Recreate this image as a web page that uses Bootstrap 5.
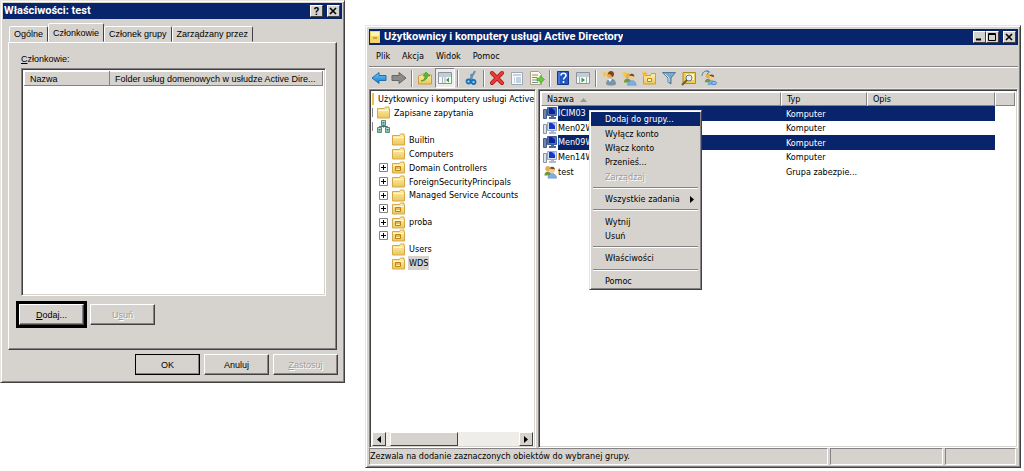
<!DOCTYPE html>
<html lang="pl">
<head>
<meta charset="utf-8">
<meta name="viewport" content="width=device-width, initial-scale=1">
<title>Użytkownicy i komputery usługi Active Directory</title>
<link href="https://cdn.jsdelivr.net/npm/bootstrap@5.3.0/dist/css/bootstrap.min.css" rel="stylesheet">
<style>
:root{--face:#d6d3ce;--navy:#08246b;--hi:#fff;--sh:#848284;--dk:#424142}
body{font:9px/14px "DejaVu Sans Condensed","DejaVu Sans",sans-serif;color:#000;background:#fff}
svg{display:block;flex:none}
.frame{background:var(--face);border:1px solid;border-color:#e7e5e1 var(--dk) var(--dk) #e7e5e1;box-shadow:inset 1px 1px var(--hi),inset -1px -1px var(--sh)}
.dlg{flex:0 0 345px;height:383px;padding:2px 2px 7px;font-family:"Liberation Sans",sans-serif}
.console{min-width:0;margin:25px 3px 3px 20px;padding:3px 2px 2px 3px}
.titlebar{background:var(--navy);color:#fff;height:16px;padding:0 2px 0 1px;font:bold 11px/16px Roboto,"Liberation Sans",sans-serif}
.capbtn{width:13px;height:12px;padding:0;background:var(--face);border:1px solid;border-color:var(--hi) var(--dk) var(--dk) var(--hi);border-radius:0}
.tabrow{padding:6px 6px 0;height:23px}
.tabrow button{height:16px;padding:0 4px;border:1px solid;border-color:var(--hi) var(--dk) transparent var(--hi);border-radius:2px 2px 0 0;background:var(--face);line-height:14px;white-space:nowrap}
.tabrow button.active{height:19px;z-index:1}
.panel{margin:0 5px;height:308px;border:1px solid;border-color:var(--hi) var(--dk) var(--dk) var(--hi);box-shadow:inset -1px -1px var(--sh);padding:9px 10px 0 10px}
.inset-l{margin-left:2px}
.sunken{background:#fff;border:1px solid;border-color:var(--sh) var(--hi) var(--hi) var(--sh);box-shadow:inset 1px 1px var(--dk),inset -1px -1px var(--face)}
.members{height:228px;margin-top:2px;padding:2px}
.grid-head th{height:14px;line-height:12px;padding:0 5px;font-weight:normal;background:var(--face);border:1px solid;border-color:var(--hi) var(--sh) var(--sh) var(--hi);white-space:nowrap;overflow:hidden}
.push{width:65px;height:21px;padding:0;background:var(--face);border:1px solid;border-color:var(--hi) var(--dk) var(--dk) var(--hi);box-shadow:inset -1px -1px var(--sh);line-height:14px;border-radius:0;color:#000}
.push:disabled{color:#a09d98;text-shadow:1px 1px #fff}
.push.default{outline:1px solid #000;outline-offset:-1px}
.push.marked{outline:3px solid #000}
.addrow{gap:6px}
.menus{height:22px;padding:0 0 0 1px;border-bottom:1px solid var(--sh)}
.menus button{border:0;background:none;padding:0 6px}
.tools{height:22px;border-top:1px solid var(--hi);border-bottom:1px solid #e7e5e1}
.tools button{width:20px;height:20px;padding:2px;border:0;background:none}
.tools button.active{background:#efedea;border:1px solid;border-color:var(--sh) var(--hi) var(--hi) var(--sh);padding:1px}
.vsep{width:6px;height:17px;flex:none;background:linear-gradient(var(--sh),var(--sh)) 2px 0/1px 100% no-repeat,linear-gradient(#fff,#fff) 3px 0/1px 100% no-repeat}
.panes{min-height:0;gap:2px}
.treepane{flex:0 0 167px;padding:2px 2px 1px;overflow:hidden}
.tree{height:178px}
.tree li{gap:4px;white-space:nowrap;min-height:0}
.tree li.lv2{padding-left:7px}
.tree li.leaf{padding-left:20px}
.tree .cur{background:var(--face);padding:0 1px;margin-left:-1px}
.sb{height:14px;background:#efedea}
.sb button{width:14px;height:14px;padding:2px}
.sb .thumb{width:68px;margin-left:4px}
.raised{background:var(--face);border:1px solid;border-color:var(--hi) var(--dk) var(--dk) var(--hi)}
.listpane{min-width:0;padding:2px}
.objs{table-layout:fixed;width:100%;white-space:nowrap;border-collapse:separate;border-spacing:0}
.objs tbody tr:nth-child(odd) td{height:15px}
.objs tbody tr:nth-child(even) td{height:14px}
.objs td{padding:0 0 0 5px;overflow:hidden;line-height:14px}
.objs td:first-child{padding-left:2px}
.objs tr.sel td:not(:first-child),.objs tr.sel .nm{background:var(--navy);color:#fff}
.objs tr.sel td:last-child{background:none}
.objs tr.sel .nm{height:15px}
.ctx{left:50px;top:20px;width:113px;height:180px;padding:1px;z-index:5}
.ctx button{border:0;background:none;padding:0 6px 0 14px;min-height:0;line-height:14px;text-align:left;white-space:nowrap}
.ctx button.hot{background:var(--navy);color:#fff}
.ctx button:disabled{color:#a09d98;text-shadow:1px 1px #fff}
.ctx hr{margin:0 2px;height:8px;border:0;opacity:1;flex:none;background:linear-gradient(var(--sh),var(--sh)) 0 3px/100% 1px no-repeat,linear-gradient(#fff,#fff) 0 4px/100% 1px no-repeat}
.status{height:17px;gap:2px;padding-right:2px}
.status div{border:1px solid;border-color:var(--sh) var(--hi) var(--hi) var(--sh);line-height:15px;white-space:nowrap}
.status .p2{width:113px}.status .p3{width:71px}
</style>
</head>
<body class="d-flex vh-100 align-items-start">
<svg width="0" height="0" class="position-absolute" aria-hidden="true">
<defs>
<linearGradient id="gf" x2="0" y2="1"><stop stop-color="#fff0b0"/><stop offset="1" stop-color="#eec65a"/></linearGradient>
<linearGradient id="gb" x2="0" y2="1"><stop stop-color="#6cc8f8"/><stop offset="1" stop-color="#1278d0"/></linearGradient>
<symbol id="folder" viewBox="0 0 13 13"><path d="M.5 12V2.5h7l1-1.500h3.500v2h.5v9z" fill="url(#gf)" stroke="#d3a848"/><path d="M1.500 4.500h10" stroke="#fff8d8"/></symbol>
<symbol id="ou" viewBox="0 0 13 13"><use href="#folder"/><path d="M3.500 5.500h5v4h-5zM3.500 7h5" fill="#fff3b0" stroke="#b98312"/></symbol>
<symbol id="domain" viewBox="0 0 13 13"><path d="M4.500.5h4v5h-4zM.5 7.500h4v5h-4zM8.500 7.500h4v5h-4z" fill="#b6dfc8" stroke="#4e8f80"/><path d="M5.500 2.500h2M5.500 4h2M1.500 9.500h2M9.500 9.500h2M1.500 11h2M9.500 11h2M6.500 5.500v2M2.500 7V6.500h8V7" stroke="#42737b" fill="none"/></symbol>
<symbol id="plus" viewBox="0 0 9 9"><path d="M.5.5h8v8h-8z" fill="#fff" stroke="#848284"/><path d="M2 4.500h5M4.500 2v5" stroke="#000"/></symbol>
<symbol id="pc" viewBox="0 0 15 14"><path d="M.5 3.500h3v9h-3z" fill="#dde3ea" stroke="#8793a5"/><path d="M4.500 1.500h9v8h-9z" fill="#d8e2f4" stroke="#9aa9c8"/><path d="M6 2h6v6H6z" fill="#1836c8"/><path d="M9 2h3v3z" fill="#84b4ff"/><path d="M8 10h3v1h2v2H6v-2h2z" fill="#aeb9cb"/></symbol>
<symbol id="pcs" viewBox="0 0 15 14"><path d="M.5 3.500h3v9h-3z" fill="#7386a8" stroke="#435b8c"/><path d="M4.500 1.500h9v8h-9z" fill="#566fae" stroke="#415891"/><path d="M6 2h6v6H6z" fill="#08269a"/><path d="M9 2h3v3z" fill="#476fbd"/><path d="M8 10h3v1h2v2H6v-2h2z" fill="#51699a"/></symbol>
<symbol id="group" viewBox="0 0 16 16"><circle cx="5" cy="4" r="3" fill="#e5ae55"/><path d="M1 12c0-6 8-6 8 0z" fill="#6e9b3c"/><circle cx="10" cy="6" r="3" fill="#f0cc91"/><path d="M7 4c1-3 6-3 6 1-2 0-4-1-6-1z" fill="#754a20"/><path d="M5 15c0-7 10-7 10 0z" fill="#7eaee2" stroke="#5282b8" stroke-width=".5"/></symbol>
<symbol id="back" viewBox="0 0 16 16"><path d="M1 8l7-5.500V5.500h7v5H8v3z" fill="url(#gb)" stroke="#206fb0"/></symbol>
<symbol id="fwd" viewBox="0 0 16 16"><path d="M15 8L8 2.500V5.500H1v5h7v3z" fill="#8b8b8b" stroke="#666"/></symbol>
<symbol id="upf" viewBox="0 0 16 16"><path d="M1.500 14V6l3-1 1-1h3l1 1h5v9z" fill="url(#gf)" stroke="#c99d38"/><path d="M4 11c3-1 4-2 4-5H6L9 2l4 4h-2.500c0 3-3 5-6.500 5z" fill="#54bd35" stroke="#319120" stroke-width=".6"/></symbol>
<symbol id="treev" viewBox="0 0 16 16"><path d="M1.500 2.500h13v11h-13z" fill="#f8fafb" stroke="#8a949d"/><path d="M2 4h12M2 6h12" stroke="#8ca0b2"/><path d="M5.500 7v6M8 7v6" stroke="#a2afbb"/><path d="M12 7.500v5L9 10z" fill="#369b3b"/></symbol>
<symbol id="playv" viewBox="0 0 16 16"><path d="M1.500 2.500h13v11h-13z" fill="#f8fafb" stroke="#8a949d"/><path d="M2 4h12M2 6h12" stroke="#8ca0b2"/><path d="M4.500 7v6M11.500 7v6" stroke="#a2afbb"/><path d="M6.500 7.500v5l3.500-2.500z" fill="#369b3b"/></symbol>
<symbol id="cut" viewBox="0 0 16 16"><path d="M12 1L7 10M8 4l1 6" stroke="#5d91b8" stroke-width="2"/><circle cx="5.500" cy="11.500" r="2" fill="none" stroke="#1473bd" stroke-width="1.800"/><circle cx="10.500" cy="12" r="2" fill="none" stroke="#1473bd" stroke-width="1.800"/></symbol>
<symbol id="del" viewBox="0 0 16 16"><path d="M3 3l10 10M13 3L3 13" stroke="#a61414" stroke-width="4" stroke-linecap="round"/><path d="M3 3l10 10M13 3L3 13" stroke="#ed3838" stroke-width="2.500" stroke-linecap="round"/></symbol>
<symbol id="props" viewBox="0 0 16 16"><path d="M2.500 2.500h11v12h-11z" fill="#f8fafc" stroke="#9aa9b9"/><path d="M4 5h8M5 8h1M7 8h5M5 10h1M7 10h5M5 12h1M7 12h5" stroke="#8fa8c2"/></symbol>
<symbol id="exp" viewBox="0 0 16 16"><path d="M1.500 1.500h8l3 3v10h-11z" fill="#fffbe3" stroke="#a9a183"/><path d="M3 5h6M3 7.500h5M3 10h5M3 12.500h6" stroke="#7f8b94"/><path d="M8 8h3V5.500L15.500 9.500 11 13.500V11H8z" fill="#65ca3e" stroke="#3a9c28" stroke-width=".6"/></symbol>
<symbol id="help" viewBox="0 0 16 16"><path d="M2.500 1.500h11v13h-11z" fill="#1f57c4" stroke="#173785"/><path d="M4 2v12" stroke="#6f99e7"/><path d="M6 5.500c0-3 5-3 5 0 0 2-2.500 2-2.500 4M8.500 11v2" stroke="#fff" stroke-width="1.600" fill="none"/></symbol>
<symbol id="user" viewBox="0 0 16 16"><circle cx="9" cy="5" r="3" fill="#e9a54c"/><path d="M7 4c0-4 6-4 6 0 0 2-1 3-2 3 0-2-2-3-4-3z" fill="#7a4519"/><path d="M5 14c0-7 10-7 10 0-1 2-9 2-10 0z" fill="#7795a9"/><path d="M1 2l2 1 1-2 1 2 2 0-2 2 1 2-2-1-2 1 .500-2z" fill="#ffc52e"/><path d="M7 9h4l-2 3z" fill="#eef4f7"/></symbol>
<symbol id="users" viewBox="0 0 16 16"><g transform="translate(2 2) scale(.88)"><use href="#group" width="16" height="16"/></g><path d="M1 2l2 1 1-2 1 2h2L5 5l1 2-2-1-2 1 .500-2z" fill="#ffc52e"/></symbol>
<symbol id="newou" viewBox="0 0 16 16"><path d="M2.500 14V5.500h7l1-2h4V14z" fill="url(#gf)" stroke="#c99d38"/><path d="M6.500 8.500h4v3h-4z" fill="#fffbd1" stroke="#b78716"/><path d="M1 2l2 1 1-2 1 2h2L5 5l1 2-2-1-2 1 .500-2z" fill="#ffb51a"/></symbol>
<symbol id="filter" viewBox="0 0 16 16"><path d="M1.500 2.500h13L10 8v6l-3-2V8z" fill="#80a8c6" stroke="#507b9c"/><path d="M4 4l4 4v4" stroke="#d5e8f4" fill="none"/></symbol>
<symbol id="find" viewBox="0 0 16 16"><path d="M2 2.500h12.500v11H2z" fill="#f3ce50" stroke="#ae8b20"/><path d="M5 4h8v6H5z" fill="#fff7cd"/><circle cx="8" cy="8" r="3" fill="#e2effa" stroke="#6b7580"/><path d="M6 10l-5 5" stroke="#725a2d" stroke-width="2"/></symbol>
<symbol id="moveg" viewBox="0 0 16 16"><g transform="translate(3 3) scale(.78)"><use href="#group" width="16" height="16"/></g><path d="M1 6c0-5 5-6 7-4M6 .500L8.500 2 6 4" fill="none" stroke="#3681c9"/><ellipse cx="13" cy="13" rx="2.500" ry="1.500" fill="#9bc8f2" stroke="#5289ca"/></symbol>
<symbol id="close" viewBox="0 0 9 8"><path d="M2 1l6 6M8 1L2 7" stroke="#000" stroke-width="1.600"/></symbol>
</defs></svg>

<section class="dlg frame d-flex flex-column" aria-label="Właściwości: test">
  <header class="titlebar d-flex align-items-center flex-shrink-0"><span class="me-auto">Właściwości: test</span>
    <button class="capbtn me-1 fw-bold lh-1 d-flex justify-content-center" aria-label="Pomoc kontekstowa">?</button>
    <button class="capbtn" aria-label="Zamknij"><svg width="9" height="8"><use href="#close"/></svg></button></header>
  <nav class="tabrow d-flex align-items-end" role="tablist"><button role="tab">Ogólne</button><button class="active position-relative" role="tab" aria-selected="true">Członkowie</button><button role="tab">Członek grupy</button><button role="tab">Zarządzany przez</button></nav>
  <div class="panel">
    <div id="memlabel" class="inset-l"><u>C</u>złonkowie:</div>
    <div class="members inset-l sunken"><table class="w-100 grid-head" aria-labelledby="memlabel" style="table-layout:fixed"><colgroup><col style="width:85px"><col></colgroup><thead><tr><th>Nazwa</th><th>Folder usług domenowych w usłudze Active Dire...</th></tr></thead></table></div>
    <div class="addrow d-flex mt-2"><button class="push marked"><u>D</u>odaj...</button><button class="push" disabled>U<u>s</u>uń</button></div>
  </div>
  <footer class="d-flex justify-content-end gap-1 mt-1 me-1"><button class="push default">OK</button><button class="push">Anuluj</button><button class="push" disabled><u>Z</u>astosuj</button></footer>
</section>

<main class="console frame d-flex flex-column flex-fill align-self-stretch">
  <header class="titlebar d-flex align-items-center flex-shrink-0"><svg class="me-1" width="10" height="12" viewBox="0 0 10 12"><path d="M0 0h10v12H0z" fill="#f5d568"/><path d="M1 1h8v4H1z" fill="#fff3b2"/><path d="M3 7h4" stroke="#9c781a"/></svg><span class="me-auto text-truncate">Użytkownicy i komputery usługi Active Directory</span>
    <button class="capbtn" aria-label="Minimalizuj"><svg width="11" height="10"><path d="M2 7.500h5" stroke="#000" stroke-width="2"/></svg></button>
    <button class="capbtn me-1" aria-label="Maksymalizuj"><svg width="11" height="10"><path d="M1.500 1.500h7v7h-7zM1 2.500h8" stroke="#000" fill="none"/></svg></button>
    <button class="capbtn" aria-label="Zamknij"><svg width="9" height="8"><use href="#close"/></svg></button></header>
  <nav class="menus d-flex align-items-center flex-shrink-0"><button>Plik</button><button>Akcja</button><button>Widok</button><button>Pomoc</button></nav>
  <div class="tools d-flex align-items-center flex-shrink-0" role="toolbar">
    <button aria-label="Wstecz"><svg width="16" height="16"><use href="#back"/></svg></button><button aria-label="Dalej"><svg width="16" height="16"><use href="#fwd"/></svg></button><i class="vsep"></i>
    <button aria-label="W górę"><svg width="16" height="16"><use href="#upf"/></svg></button><button class="active" aria-label="Drzewo konsoli"><svg width="16" height="16"><use href="#treev"/></svg></button><i class="vsep"></i>
    <button aria-label="Wytnij"><svg width="16" height="16"><use href="#cut"/></svg></button><i class="vsep"></i>
    <button aria-label="Usuń"><svg width="16" height="16"><use href="#del"/></svg></button><button aria-label="Właściwości"><svg width="16" height="16"><use href="#props"/></svg></button><button aria-label="Eksportuj listę"><svg width="16" height="16"><use href="#exp"/></svg></button><i class="vsep"></i>
    <button aria-label="Pomoc"><svg width="16" height="16"><use href="#help"/></svg></button><button aria-label="Okienko akcji"><svg width="16" height="16"><use href="#playv"/></svg></button><i class="vsep"></i>
    <button aria-label="Nowy użytkownik"><svg width="16" height="16"><use href="#user"/></svg></button><button aria-label="Nowa grupa"><svg width="16" height="16"><use href="#users"/></svg></button><button aria-label="Nowa jednostka"><svg width="16" height="16"><use href="#newou"/></svg></button><button aria-label="Filtr"><svg width="16" height="16"><use href="#filter"/></svg></button><button aria-label="Znajdź"><svg width="16" height="16"><use href="#find"/></svg></button><button aria-label="Dodaj do grupy"><svg width="16" height="16"><use href="#moveg"/></svg></button>
  </div>
  <div class="panes d-flex flex-fill">
    <div class="treepane sunken d-flex flex-column">
      <ul class="tree list-unstyled mb-auto d-flex flex-column">
        <li class="d-flex flex-fill align-items-center"><svg width="2" height="12"><path d="M0 0h2v12H0z" fill="#e9c24f"/></svg>Użytkownicy i komputery usługi Active</li>
        <li class="d-flex flex-fill align-items-center"><svg width="1" height="9"><path d="M0 0h1v9H0z" fill="#848284"/></svg><svg width="13" height="13"><use href="#folder"/></svg>Zapisane zapytania</li>
        <li class="d-flex flex-fill align-items-center"><svg width="1" height="9"><path d="M0 0h1v9H0z" fill="#848284"/></svg><svg width="13" height="13"><use href="#domain"/></svg></li>
        <li class="leaf d-flex flex-fill align-items-center"><svg width="13" height="13"><use href="#folder"/></svg>Builtin</li>
        <li class="leaf d-flex flex-fill align-items-center"><svg width="13" height="13"><use href="#folder"/></svg>Computers</li>
        <li class="lv2 d-flex flex-fill align-items-center"><svg width="9" height="9"><use href="#plus"/></svg><svg width="13" height="13"><use href="#ou"/></svg>Domain Controllers</li>
        <li class="lv2 d-flex flex-fill align-items-center"><svg width="9" height="9"><use href="#plus"/></svg><svg width="13" height="13"><use href="#folder"/></svg>ForeignSecurityPrincipals</li>
        <li class="lv2 d-flex flex-fill align-items-center"><svg width="9" height="9"><use href="#plus"/></svg><svg width="13" height="13"><use href="#folder"/></svg>Managed Service Accounts</li>
        <li class="lv2 d-flex flex-fill align-items-center"><svg width="9" height="9"><use href="#plus"/></svg><svg width="13" height="13"><use href="#ou"/></svg></li>
        <li class="lv2 d-flex flex-fill align-items-center"><svg width="9" height="9"><use href="#plus"/></svg><svg width="13" height="13"><use href="#ou"/></svg>proba</li>
        <li class="lv2 d-flex flex-fill align-items-center"><svg width="9" height="9"><use href="#plus"/></svg><svg width="13" height="13"><use href="#ou"/></svg></li>
        <li class="leaf d-flex flex-fill align-items-center"><svg width="13" height="13"><use href="#folder"/></svg>Users</li>
        <li class="leaf d-flex flex-fill align-items-center"><svg width="13" height="13"><use href="#ou"/></svg><span class="cur">WDS</span></li>
      </ul>
      <div class="sb d-flex flex-shrink-0"><button class="raised" aria-label="Przewiń w lewo"><svg width="8" height="7"><path d="M6 0v7L2 3.500z"/></svg></button><div class="thumb raised"></div><button class="raised ms-auto" aria-label="Przewiń w prawo"><svg width="8" height="7"><path d="M2 0v7l4-3.500z"/></svg></button></div>
    </div>
    <div class="listpane sunken flex-fill position-relative">
      <table class="objs"><colgroup><col style="width:240px"><col style="width:86px"><col style="width:128px"><col></colgroup>
        <thead class="grid-head"><tr><th>Nazwa <svg class="d-inline-block ms-1 align-middle" width="7" height="4"><path d="M0 4l3.500-4L7 4z" fill="#9a9894"/></svg></th><th>Typ</th><th>Opis</th><th></th></tr></thead>
        <tbody>
          <tr class="sel"><td><div class="d-flex"><svg width="15" height="14"><use href="#pcs"/></svg><span class="nm flex-fill">ICIM03</span></div></td><td>Komputer</td><td></td><td></td></tr>
          <tr><td><div class="d-flex"><svg width="15" height="14"><use href="#pc"/></svg><span class="nm flex-fill">Men02W</span></div></td><td>Komputer</td><td></td><td></td></tr>
          <tr class="sel"><td><div class="d-flex"><svg width="15" height="14"><use href="#pcs"/></svg><span class="nm flex-fill">Men09W</span></div></td><td>Komputer</td><td></td><td></td></tr>
          <tr><td><div class="d-flex"><svg width="15" height="14"><use href="#pc"/></svg><span class="nm flex-fill">Men14W</span></div></td><td>Komputer</td><td></td><td></td></tr>
          <tr><td><div class="d-flex"><svg width="15" height="14"><use href="#group"/></svg><span class="nm flex-fill">test</span></div></td><td>Grupa zabezpie...</td><td></td><td></td></tr>
        </tbody></table>
      <div class="ctx frame position-absolute d-flex flex-column" role="menu">
        <button class="hot flex-fill" role="menuitem">Dodaj do grupy...</button><button class="flex-fill" role="menuitem">Wyłącz konto</button><button class="flex-fill" role="menuitem">Włącz konto</button><button class="flex-fill" role="menuitem">Przenieś...</button><button class="flex-fill" role="menuitem" disabled>Zarządzaj</button><hr>
        <button class="flex-fill d-flex align-items-center justify-content-between" role="menuitem">Wszystkie zadania<svg width="4" height="7"><path d="M0 0v7l4-3.500z"/></svg></button><hr>
        <button class="flex-fill" role="menuitem">Wytnij</button><button class="flex-fill" role="menuitem">Usuń</button><hr>
        <button class="flex-fill" role="menuitem">Właściwości</button><hr>
        <button class="flex-fill" role="menuitem">Pomoc</button>
      </div>
    </div>
  </div>
  <footer class="status d-flex flex-shrink-0"><div class="flex-fill text-truncate">Zezwala na dodanie zaznaczonych obiektów do wybranej grupy.</div><div class="p2"></div><div class="p3"></div></footer>
</main>
<script src="https://cdn.jsdelivr.net/npm/bootstrap@5.3.0/dist/js/bootstrap.bundle.min.js"></script>
</body>
</html>
